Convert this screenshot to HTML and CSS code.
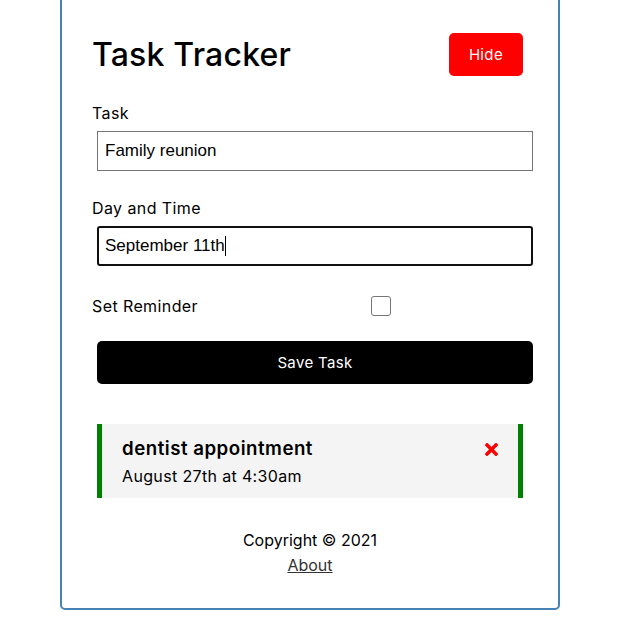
FILE: index.html
```html
<!DOCTYPE html>
<html lang="en">
<head>
<meta charset="utf-8">
<title>Task Tracker</title>
<link rel="stylesheet" href="styles.css">
</head>
<body>
<div class="container">
  <header class="header">
    <h1 class="title">Task Tracker</h1>
    <button class="btn btn-hide" type="button">Hide</button>
  </header>
  <form class="add-form">
    <div class="form-control">
      <label class="field-label">Task</label>
      <input class="text-input" type="text" value="Family reunion">
    </div>
    <div class="form-control">
      <label class="field-label">Day and Time</label>
      <div class="field-wrap">
        <input class="text-input focused" type="text" value="September 11th">
        <span class="caret"></span>
      </div>
    </div>
    <div class="form-control form-control-check">
      <label class="field-label check-label">Set Reminder</label>
      <span class="check-wrap"><input class="check-box" type="checkbox"></span>
    </div>
    <input class="btn btn-block" type="submit" value="Save Task">
  </form>
  <div class="tasks">
    <div class="task reminder">
      <h3 class="task-title">dentist appointment
        <svg class="del-icon" viewBox="0 0 352 512" width="13" height="19" aria-hidden="true"><path fill="red" d="M242.72 256l100.07-100.07c12.28-12.28 12.28-32.19 0-44.48l-22.24-22.24c-12.28-12.28-32.19-12.28-44.48 0L176 189.28 75.93 89.21c-12.28-12.28-32.19-12.28-44.48 0L9.21 111.45c-12.28 12.28-12.28 32.19 0 44.48L109.28 256 9.21 356.07c-12.28 12.28-12.28 32.19 0 44.48l22.24 22.24c12.28 12.28 32.2 12.28 44.48 0L176 322.72l100.07 100.07c12.28 12.28 32.2 12.28 44.48 0l22.24-22.24c12.28-12.28 12.28-32.19 0-44.48L242.72 256z"/></svg>
      </h3>
      <p class="task-day">August 27th at 4:30am</p>
    </div>
  </div>
  <footer class="footer">
    <p class="copy">Copyright &copy; 2021</p>
    <a class="about" href="#">About</a>
  </footer>
</div>
</body>
</html>
```
FILE: styles.css
```css
* {
  box-sizing: border-box;
  margin: 0;
  padding: 0;
}

body {
  font-family: "Inter", "Noto Sans", sans-serif;
  font-size: 16px;
  line-height: 25px;
  color: #000;
  background: #fff;
}

.container {
  width: 500px;
  margin: -4px 0 30px 60px;
  border: 2px solid steelblue;
  border-radius: 5px;
  padding: 30px;
}

.header {
  display: flex;
  justify-content: space-between;
  align-items: center;
  margin-bottom: 20px;
}

.title {
  font-size: 32px;
  line-height: 48px;
  font-weight: 500;
  letter-spacing: 0.2px;
}

.btn {
  display: inline-block;
  border: none;
  border-radius: 5px;
  margin: 5px;
  padding: 10px 20px;
  font-family: inherit;
  font-size: 15px;
  line-height: 23px;
  letter-spacing: 0.35px;
  color: #fff;
  cursor: pointer;
}

.btn-hide {
  background: #ff0000;
}

.add-form {
  margin-bottom: 40px;
}

.form-control {
  display: flow-root;
  margin: 20px 0;
}

.field-label {
  display: block;
  font-size: 16px;
  line-height: 25px;
  letter-spacing: 0.4px;
}

.field-wrap {
  display: flow-root;
  position: relative;
}

.text-input {
  display: block;
  width: 100%;
  height: 40px;
  margin: 5px;
  padding: 3px 7px;
  font-family: "Liberation Sans", Arial, sans-serif;
  font-size: 17px;
  color: #000;
  border: 1px solid #767676;
  border-radius: 0;
  outline: none;
}

.text-input.focused {
  border: 2px solid #101010;
  border-radius: 3px;
  padding-left: 6px;
}

.caret {
  position: absolute;
  left: 133px;
  top: 15px;
  width: 1px;
  height: 20px;
  background: #000;
}

.form-control-check {
  display: flex;
  align-items: center;
  justify-content: space-between;
}

.check-label {
  flex: 1;
}

.check-wrap {
  flex: 2;
  display: flex;
  justify-content: center;
  margin: 5px;
}

.check-box {
  appearance: none;
  -webkit-appearance: none;
  width: 20px;
  height: 20px;
  border: 1px solid #767676;
  border-radius: 3px;
  background: #fff;
}

.btn-block {
  display: block;
  width: 100%;
  background: #000;
}

.task {
  background: #f4f4f4;
  margin: 5px;
  padding: 10px 20px;
  cursor: pointer;
}

.task.reminder {
  border-left: 5px solid green;
  border-right: 5px solid green;
}

.task-title {
  display: flex;
  align-items: center;
  justify-content: space-between;
  font-size: 18.7px;
  line-height: 30px;
  font-weight: 600;
  letter-spacing: 0.5px;
}

.del-icon {
  display: block;
}

.task-day {
  font-size: 16px;
  line-height: 24px;
  letter-spacing: 0.35px;
}

.footer {
  margin-top: 30px;
  text-align: center;
}

.copy {
  line-height: 25px;
}

.about {
  color: #333;
  line-height: 25px;
}
```
